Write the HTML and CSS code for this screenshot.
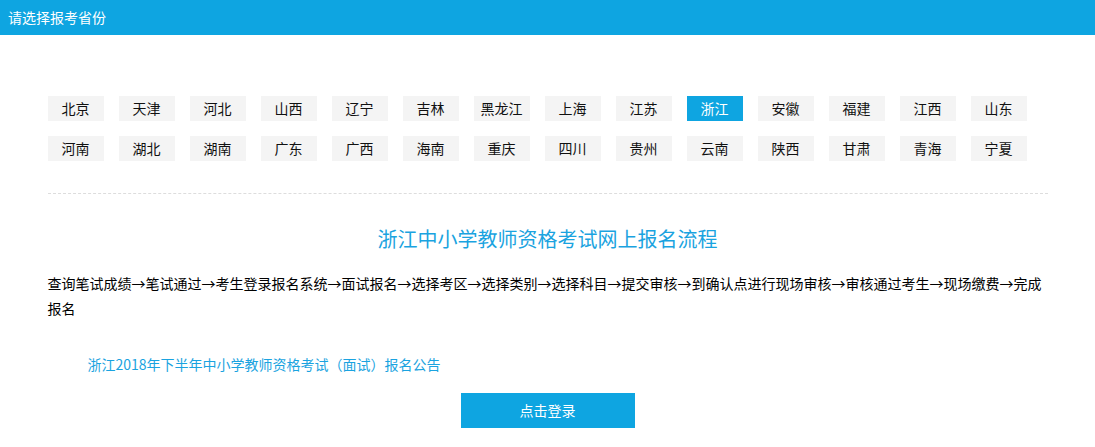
FILE: index.html
```html
<!DOCTYPE html>
<html lang="zh">
<head>
    <meta charset="UTF-8">
    <title>请选择报考省份</title>
    <link rel="stylesheet" href="styles.css">
</head>
<body>
    <div class="header">请选择报考省份</div>

    <div class="container">
        <ul class="province-list">
            <li>北京</li><li>天津</li><li>河北</li><li>山西</li><li>辽宁</li><li>吉林</li><li>黑龙江</li>
            <li>上海</li><li>江苏</li><li class="active">浙江</li><li>安徽</li><li>福建</li><li>江西</li><li>山东</li>
            <li>河南</li><li>湖北</li><li>湖南</li><li>广东</li><li>广西</li><li>海南</li><li>重庆</li>
            <li>四川</li><li>贵州</li><li>云南</li><li>陕西</li><li>甘肃</li><li>青海</li><li>宁夏</li>
        </ul>

        <div class="divider"></div>

        <h2 class="flow-title">浙江中小学教师资格考试网上报名流程</h2>
        <p class="flow-text">查询笔试成绩→笔试通过→考生登录报名系统→面试报名→选择考区→选择类别→选择科目→提交审核→到确认点进行现场审核→审核通过考生→现场缴费→完成报名</p>

        <a class="notice-link" href="#">浙江2018年下半年中小学教师资格考试（面试）报名公告</a>

        <a class="login-btn" href="#">点击登录</a>
    </div>
</body>
</html>
```

FILE: styles.css
```css
body {
    margin: 0;
    padding: 0;
    font-family: "Noto Sans CJK SC", "Liberation Sans", sans-serif;
    background-color: #fff;
    color: #000;
}
.header {
    height: 35px;
    line-height: 35px;
    padding-left: 8px;
    background-color: #0ea5e1;
    color: #fff;
    font-size: 14px;
}
.container {
    width: 1000px;
    margin: 0 auto;
}
.province-list {
    list-style: none;
    margin: 0;
    padding: 61px 0 0 0;
    display: flex;
    flex-wrap: wrap;
    gap: 15px;
}
.province-list li {
    width: 56px;
    height: 25px;
    line-height: 25px;
    text-align: center;
    font-size: 14px;
    background-color: #f4f4f4;
    color: #111;
    cursor: pointer;
}
.province-list li.active {
    background-color: #0ea5e1;
    color: #fff;
}
.divider {
    margin-top: 32px;
    border-top: 1px dashed #dddddd;
}
.flow-title {
    margin: 30px 0 0 0;
    text-align: center;
    font-size: 20px;
    font-weight: normal;
    line-height: 30px;
    color: #1aa3e0;
}
.flow-text {
    margin: 17px 0 0 0;
    font-size: 14px;
    line-height: 25px;
    color: #000;
}
.notice-link {
    display: block;
    margin-top: 32px;
    padding-left: 40px;
    font-size: 14px;
    line-height: 22px;
    color: #1aa3e0;
    text-decoration: none;
}
.login-btn {
    display: block;
    width: 174px;
    height: 35px;
    line-height: 35px;
    margin: 18px auto 0;
    text-align: center;
    background-color: #0ea5e1;
    color: #fff;
    font-size: 14px;
    text-decoration: none;
}
```
